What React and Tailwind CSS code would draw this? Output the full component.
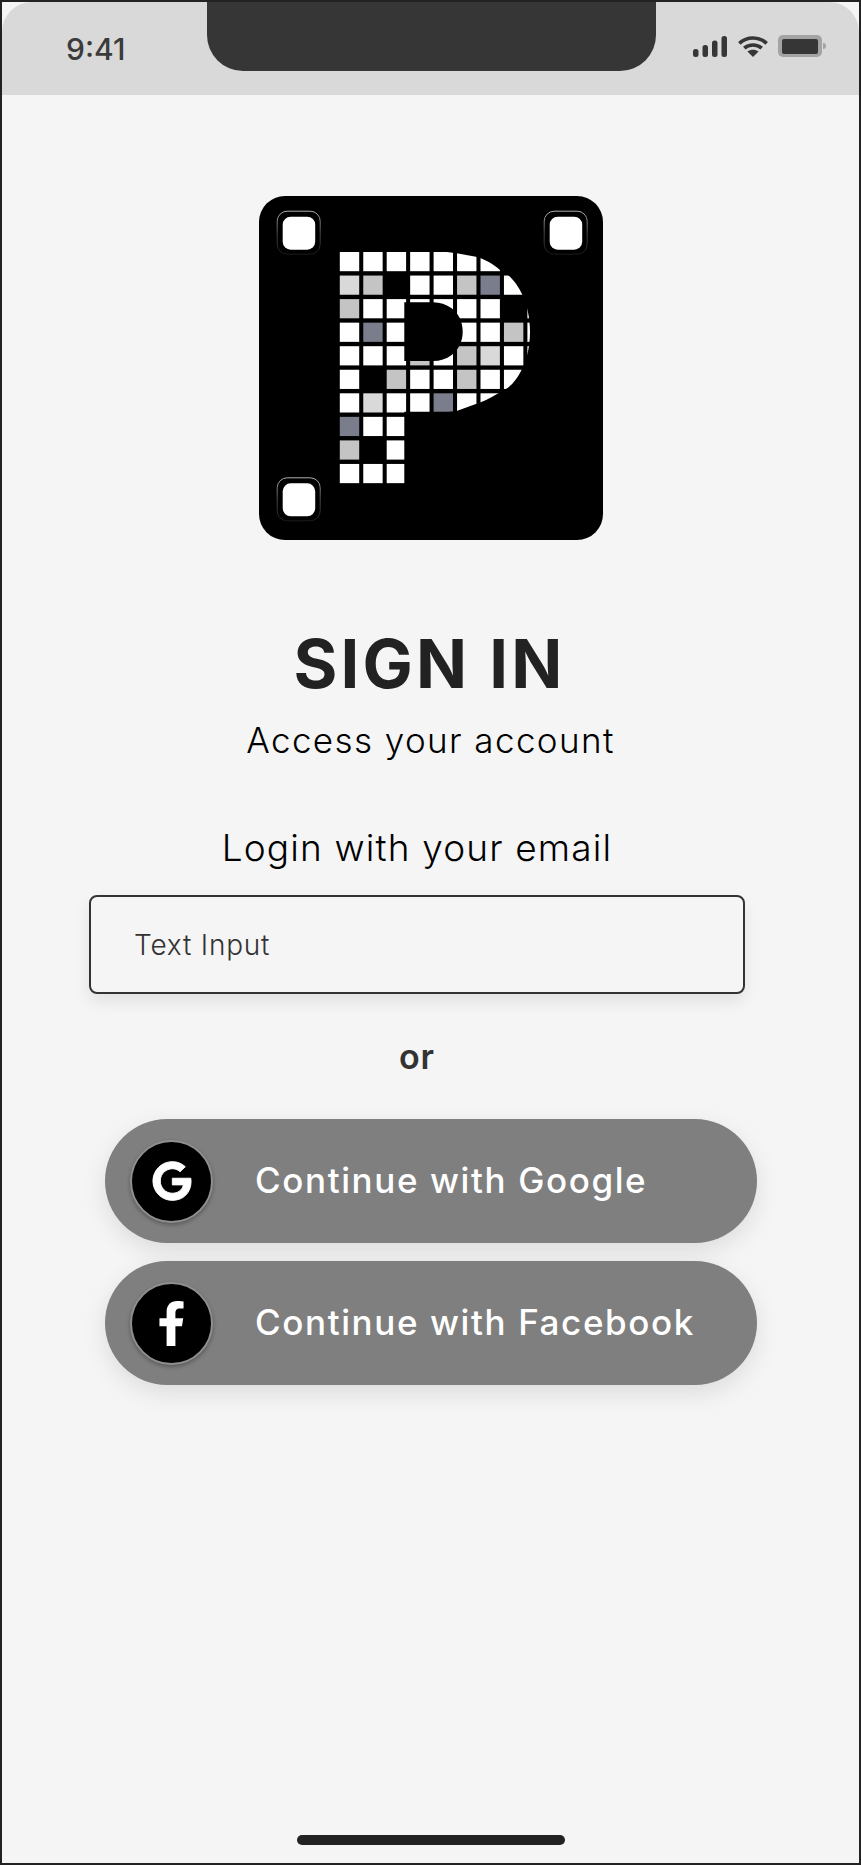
import React from "react";
import { FaGoogle, FaFacebookF } from "react-icons/fa";

const W = "#ffffff", L = "#d9d9d9", G = "#c4c4c4", D = "#7a7d8c", K = null;
const GRID = [
  [W, W, W, W, W, W, W, K, K],
  [L, G, K, W, W, G, D, W, K],
  [G, W, W, W, W, W, W, K, W],
  [W, D, W, W, W, W, W, G, W],
  [W, W, W, G, W, G, L, W, W],
  [W, K, G, W, W, G, W, W, K],
  [W, L, W, W, D, W, W, K, K],
  [D, W, W, K, K, K, K, K, K],
  [G, K, W, K, K, K, K, K, K],
  [W, W, W, K, K, K, K, K, K],
];

function Logo() {
  const corners = [
    [23.7, 20.7],
    [290.7, 20.7],
    [23.7, 287.3],
  ];
  return (
    <svg width="344" height="344" viewBox="0 0 344 344" className="block">
      <defs>
        <linearGradient id="ring" x1="0" y1="0" x2="0" y2="1">
          <stop offset="0" stopColor="#b0b0b0" />
          <stop offset="0.5" stopColor="#4a4a4a" />
          <stop offset="1" stopColor="#1a1a1a" />
        </linearGradient>
        <clipPath id="pshape">
          <path
            clipRule="evenodd"
            d="M78 55 L172 55 C182 55 190 56 197.7 57.3 L217 60.7 C226 63 234 68 241 74 L249 79 C256 85 260 92 263 98 C268 108 271 122 271 135.7 C271 150 268 163 263 173 C259 181 255 187 249 191.7 L241 196.3 C235 200 228 204 221.7 206.3 L198.3 214.7 C194 215.5 190 215.7 186 215.7 L145.3 215.7 L145.3 295 L78 295 Z M145.3 106.3 L174.3 106.3 C181 106.3 187 108.5 192.7 112.3 C199 117 203.7 125 203.7 135.7 C203.7 146 199 154 192.7 159 C187 163 181 165 174.3 165 L145.3 165 Z"
          />
        </clipPath>
      </defs>
      <rect width="344" height="344" rx="26" fill="#000" />
      <g clipPath="url(#pshape)">
        {GRID.map((row, r) =>
          row.map((c, i) =>
            c ? <rect key={`${r}-${i}`} x={80.8 + i * 23.45} y={56 + r * 23.55} width="19.4" height="19.2" fill={c} /> : null
          )
        )}
      </g>
      {corners.map(([x, y]) => (
        <g key={`${x}-${y}`}>
          <rect x={x - 5.5} y={y - 5.5} width="43" height="43" rx="10" fill="none" stroke="url(#ring)" strokeWidth="1" />
          <rect x={x} y={y} width="32.5" height="33" rx="8" fill="#fff" />
        </g>
      ))}
    </svg>
  );
}

function StatusIcons() {
  return (
    <div className="flex items-center">
      <svg width="34" height="21" viewBox="0 0 34 21" fill="#363636" className="block">
        <rect x="0" y="13" width="5.5" height="8" rx="2.5" />
        <rect x="9.5" y="9" width="5.5" height="12" rx="2.5" />
        <rect x="19" y="4.5" width="5.5" height="16.5" rx="2.5" />
        <rect x="28.5" y="0" width="5.5" height="21" rx="2.5" />
      </svg>
      <svg width="30" height="21" viewBox="0 0 30 21" className="block ml-[11px]" fill="none" stroke="#363636" strokeWidth="3.6">
        <path d="M1.3 7.4 C9 0.2 21 0.2 28.7 7.4" />
        <path d="M6.3 12.2 C11 7.9 19 7.9 23.7 12.2" />
        <path d="M15 21 L9.4 15.4 C12.8 13.2 17.2 13.2 20.6 15.4 Z" fill="#363636" stroke="none" />
      </svg>
      <div className="ml-[10px] flex items-center">
        <div className="w-[44px] h-[22px] rounded-[5px] bg-[#a3a3a3] flex items-center justify-center">
          <div className="w-[36px] h-[15px] rounded-[2px] bg-[#363636]" />
        </div>
        <div className="ml-px w-[3px] h-[6px] rounded-r-[3px] bg-[#a3a3a3]" />
      </div>
    </div>
  );
}

function SocialButton({ icon, label }) {
  return (
    <button className="flex items-center w-[652px] h-[124px] rounded-[62px] bg-[#7f7f7f] pl-[25px] shadow-[0_8px_24px_rgba(0,0,0,0.1)]">
      <span className="flex items-center justify-center w-[83px] h-[83px] rounded-full bg-black border-2 border-[#8f8f8f] shadow-[0_2px_4px_rgba(0,0,0,0.3)] text-white">
        {icon}
      </span>
      <span className="ml-[42px] -mt-[2px] text-white text-[35px] font-medium tracking-[1.6px] leading-none">{label}</span>
    </button>
  );
}

export default function App() {
  return (
    <div className="relative w-[861px] h-[1865px] border-2 border-[#222222] bg-[#f5f5f5] flex flex-col font-['Inter',sans-serif] overflow-hidden">
      <header className="h-[93px] shrink-0 rounded-t-[30px] bg-[#d9d9d9] flex items-start">
        <div className="w-[205px] pl-[64px] pt-[29px] text-[30px] leading-[36px] font-medium text-[#3b3b3b]">9:41</div>
        <div className="w-[449px] h-[69px] rounded-b-[36px] bg-[#363636]" />
        <div className="pl-[37px] pt-[33px]">
          <StatusIcons />
        </div>
      </header>

      <main className="flex-1 flex flex-col">
        <div className="mt-[101px] self-center">
          <Logo />
        </div>
        <h1 className="mt-[89px] text-center text-[67px] leading-[70px] font-bold text-[#222222] tracking-[3.2px] pr-[2px]">SIGN IN</h1>
        <p className="mt-[21px] text-center text-[35px] leading-[40px] font-light text-black tracking-[1.4px]">Access your account</p>

        <div className="ml-[87px] w-[656px]">
          <p className="mt-[68px] text-center text-[37px] leading-[40px] font-light text-black tracking-[1.15px]">Login with your email</p>
          <div className="mt-[27px] h-[99px] rounded-[8px] border-2 border-[#333333] flex items-center pl-[43px] text-[28px] font-light text-[#333333] tracking-[0.8px] shadow-[0_8px_16px_rgba(0,0,0,0.08)]">
            Text Input
          </div>
          <p className="mt-[43px] text-center text-[34px] leading-[40px] font-semibold text-[#333333] tracking-[1px]">or</p>
        </div>

        <div className="mt-[42px] ml-[103px] flex flex-col gap-[18px]">
          <SocialButton icon={<FaGoogle size={40} className="stroke-[12px]" />} label="Continue with Google" />
          <SocialButton icon={<FaFacebookF size={45} />} label="Continue with Facebook" />
        </div>

        <div className="mt-auto mb-[18px] self-center w-[268px] h-[10px] rounded-full bg-[#222222]" />
      </main>
    </div>
  );
}
